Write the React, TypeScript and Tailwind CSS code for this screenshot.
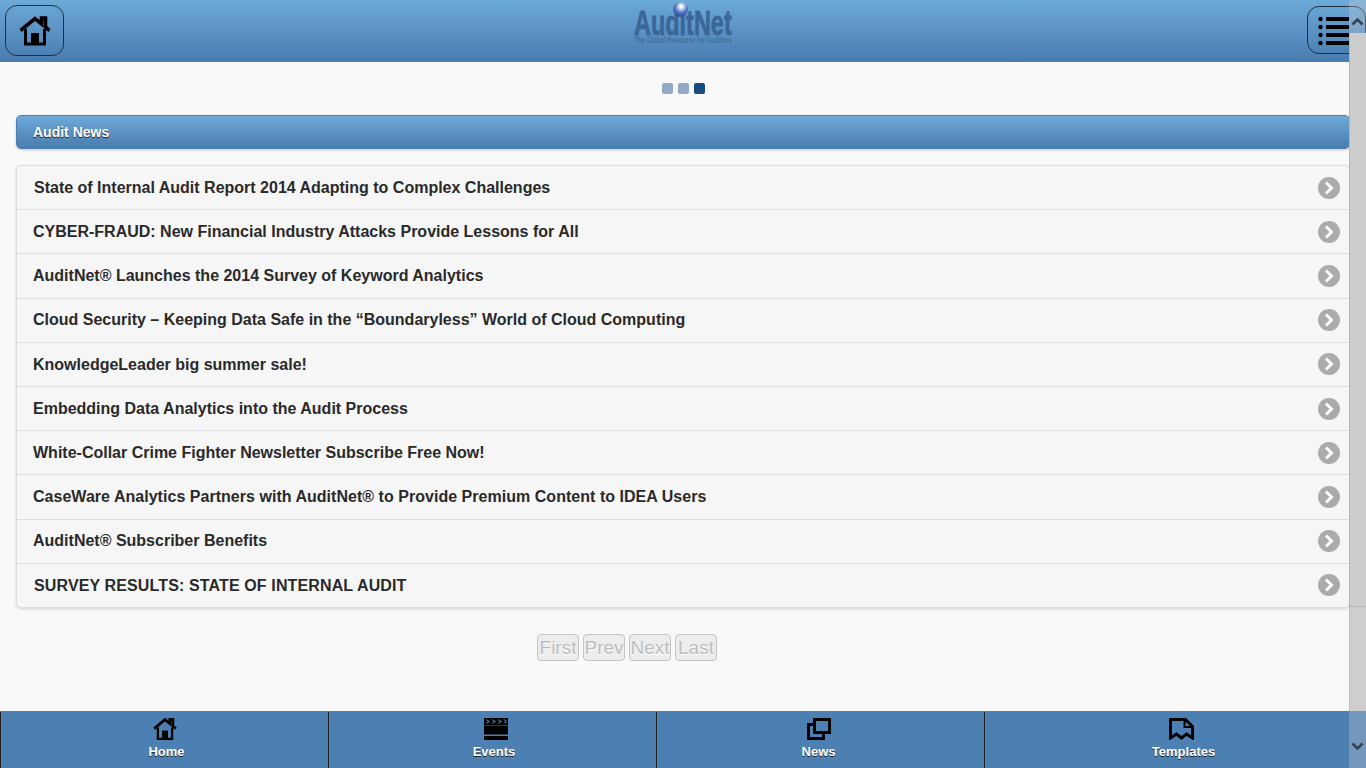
import React from "react";

const news = [
  { title: "State of Internal Audit Report 2014 Adapting to Complex Challenges", pad: "pl-[17px]", nudge: "pt-[0.4px]" },
  { title: "CYBER-FRAUD: New Financial Industry Attacks Provide Lessons for All", pad: "pl-4", nudge: "pt-[0.4px]" },
  { title: "AuditNet® Launches the 2014 Survey of Keyword Analytics", pad: "pl-4", nudge: "pt-[0.4px]" },
  { title: "Cloud Security – Keeping Data Safe in the “Boundaryless” World of Cloud Computing", pad: "pl-4", nudge: "pt-[0.4px]" },
  { title: "KnowledgeLeader big summer sale!", pad: "pl-4", nudge: "pt-[0.4px]" },
  { title: "Embedding Data Analytics into the Audit Process", pad: "pl-4", nudge: "pt-[0.4px]" },
  { title: "White-Collar Crime Fighter Newsletter Subscribe Free Now!", pad: "pl-4", nudge: "pt-[0.4px]" },
  { title: "CaseWare Analytics Partners with AuditNet® to Provide Premium Content to IDEA Users", pad: "pl-4 tracking-[0.03px]", nudge: "pt-[0.4px]" },
  { title: "AuditNet® Subscriber Benefits", pad: "pl-4", nudge: "pt-[0.4px]" },
  { title: "SURVEY RESULTS: STATE OF INTERNAL AUDIT", pad: "pl-[17px] tracking-[0.13px]", nudge: "pt-[1px]" },
];

const HomeIcon = ({ size }: { size: number }) => (
  <svg width={size} height={size} viewBox="0 0 32 32" fill="none">
    <path d="M1.500 15.500 16 3.500l6.500 5.400V3h4v9.200l4 3.300" stroke="#000" strokeWidth="3.600" />
    <path d="M6.500 14V29h19V14" stroke="#000" strokeWidth="3" />
    <rect x="12" y="18" width="8" height="11" fill="#000" />
  </svg>
);

const ListIcon = () => (
  <svg width="31" height="30" viewBox="0 0 31 30" fill="#000">
    <circle cx="2.500" cy="4" r="2.200" />
    <circle cx="2.500" cy="12" r="2.200" />
    <circle cx="2.500" cy="20" r="2.200" />
    <circle cx="2.500" cy="28" r="2.200" />
    <rect x="8" y="2" width="23" height="4" />
    <rect x="8" y="10" width="23" height="4" />
    <rect x="8" y="18" width="23" height="4" />
    <rect x="8" y="26" width="23" height="4" />
  </svg>
);

const FilmIcon = () => (
  <svg width="25" height="22" viewBox="0 0 25 22" fill="#000">
    <path d="M1 0h24v7H1zM1 7.500h24V22H1z" />
    <path d="M4 1.500 7 3.500 4 5.500H2.500L5 3.500 2.500 1.500zM10 1.500l3 2-3 2H8.500l2.500-2-2.500-2zM16 1.500l3 2-3 2h-1.500l2.500-2-2.500-2zM22 1.500l2 2-2 2h-1.500l2-2-2-2z" fill="#4d80b2" />
    <rect x="1" y="16.500" width="24" height="1.500" fill="#4d80b2" />
  </svg>
);

const WindowsIcon = () => (
  <svg width="24" height="22" viewBox="0 0 24 22" fill="none" stroke="#000" strokeWidth="3">
    <rect x="7.500" y="1.500" width="15" height="13" />
    <path d="M7.500 6.500h-6v14h15v-6" />
  </svg>
);

const TemplateIcon = () => (
  <svg width="25" height="22" viewBox="0 0 25 22" fill="none" stroke="#000" strokeWidth="3">
    <path d="M1.500 20V1.500h15l7 7V20l-6-4-5 4-5-4z" />
    <path d="M15.500 2v7h8" strokeWidth="2" />
  </svg>
);

const Chevron = ({ up }: { up?: boolean }) => (
  <svg width="13" height="9" viewBox="0 0 13 9" fill="none">
    <path d={up ? "M1.500 7.500 6.500 2.500l5 5" : "M1.500 1.500l5 5 5-5"} stroke="#36414f" strokeWidth="2.600" />
  </svg>
);

const FooterTab = ({
  icon,
  label,
  className,
  iconClass,
  labelClass,
}: {
  icon: React.ReactNode;
  label: string;
  className: string;
  iconClass: string;
  labelClass: string;
}) => (
  <div className={`flex flex-col items-center pt-[6px] ${className}`}>
    <div className={`h-[22px] flex items-center ${iconClass}`}>{icon}</div>
    <span className={`text-[13px] font-bold text-white leading-[20px] mt-[2px] [text-shadow:0_1px_0_#222] ${labelClass}`}>
      {label}
    </span>
  </div>
);

export default function App() {
  return (
    <div className="relative w-[1366px] h-[768px] overflow-hidden bg-[#f9f9f9] font-['Liberation_Sans',Arial,sans-serif] flex flex-col">
      <header className="h-[62px] shrink-0 bg-gradient-to-b from-[#6caad8] to-[#4a7cb0] flex items-center justify-between pl-[5px] border-b border-[#4d80b2]">
        <button className="w-[59px] h-[51px] rounded-[12px] border border-[#22303e] flex items-center justify-center">
          <HomeIcon size={32} />
        </button>
        <div className="relative w-[100px] h-[42px] mr-[4px] mb-[16px] text-[#3a6797]">
          <div className="pt-[8px] text-[35px] leading-[25px] font-bold origin-left scale-x-[0.67] whitespace-nowrap [-webkit-text-stroke:0.8px_#3a6797]">
            AuditNet
          </div>
          <div className="mt-[2px] text-[9px] leading-[7px] font-bold text-[#41709f] origin-left scale-x-[0.68] whitespace-nowrap">
            The Global Resource for Auditors
          </div>
          <span className="absolute left-[39px] top-0 w-[15px] h-[15px] rounded-full bg-[radial-gradient(circle_at_55%_30%,#ffffff_8%,#4f78c8_45%,#1c2f70)]" />
        </div>
        <button className="w-[59px] h-[48px] mb-[1px] rounded-[12px] border border-[#22303e] flex items-center pl-[10px]">
          <ListIcon />
        </button>
      </header>

      <main className="flex-1 w-full px-4 flex flex-col">
        <div className="flex justify-center gap-[5px] pt-[21px]">
          <span className="w-[11px] h-[11px] rounded-[2px] bg-[#92a9c6]" />
          <span className="w-[11px] h-[11px] rounded-[2px] bg-[#92a9c6]" />
          <span className="w-[11px] h-[11px] rounded-[2px] bg-[#1a4c84]" />
        </div>

        <div className="mt-[21px] h-[34px] rounded-[5px] border border-[#4a80b4] bg-gradient-to-b from-[#6caad8] to-[#4a7cb0] flex items-center pl-4 shadow-[0_1px_3px_rgba(0,0,0,0.2)]">
          <span className="text-[14px] font-bold text-white [text-shadow:0_1px_1px_#222]">Audit News</span>
        </div>

        <ul className="mt-4 rounded-[5px] border border-[#ddd] bg-[#f6f6f6] shadow-[0_1px_3px_rgba(0,0,0,0.15)]">
          {news.map((item, i) => (
            <li
              key={item.title}
              className={`flex items-center justify-between pr-[9px] text-[16px] font-bold text-[#2a2a2a] ${item.pad} ${
                i > 0 ? "h-[44.2px] border-t border-[#ddd]" : "h-[43.2px]"
              }`}
            >
              <span className={item.nudge}>{item.title}</span>
              <span className="w-[22px] h-[22px] rounded-full bg-[#ababab] flex items-center justify-center">
                <svg width="12" height="14" viewBox="0 0 12 14" fill="none">
                  <path d="M3 1.500 8.500 7 3 12.500" stroke="#fff" strokeWidth="3" />
                </svg>
              </span>
            </li>
          ))}
        </ul>

        <div className="mt-[26px] pr-[112px] flex justify-center gap-1">
          {["First", "Prev", "Next", "Last"].map((label) => (
            <span
              key={label}
              className="w-[42px] h-[27px] rounded-[4px] border border-[#c4c4c4] bg-[#ededed] text-[#bdbdbd] text-[19px] leading-[26px] text-center [text-shadow:0_1px_0_#fff]"
            >
              {label}
            </span>
          ))}
        </div>
      </main>

      <footer className="h-[57px] shrink-0 bg-[#4d80b2] grid grid-cols-[329px_328px_328px_381px] border-t border-[#4d80b2]">
        <FooterTab className="border-l border-r border-[#222]" iconClass="" labelClass="ml-[4px]" icon={<HomeIcon size={24} />} label="Home" />
        <FooterTab className="border-r border-[#222]" iconClass="ml-[5px]" labelClass="ml-[3px]" icon={<FilmIcon />} label="Events" />
        <FooterTab className="border-r border-[#222]" iconClass="mr-[3px]" labelClass="mr-[4px]" icon={<WindowsIcon />} label="News" />
        <FooterTab className="" iconClass="ml-[11px]" labelClass="ml-[16px]" icon={<TemplateIcon />} label="Templates" />
      </footer>

      <div className="absolute right-0 top-0 bottom-0 w-[17px] flex flex-col">
        <div className="h-[33px] pt-[17px] bg-[#cfcfcf]/30 flex justify-center">
          <div className="h-[9px] flex"><Chevron up /></div>
        </div>
        <div className="h-[574px] bg-[#cdcdcd] border-l border-b border-[#b4b4b4]" />
        <div className="h-[104px] bg-[#cecece] border-l border-[#bdbdbd]" />
        <div className="h-[57px] pt-[31px] bg-[#cfcfcf]/30 flex justify-center">
          <div className="h-[9px] flex"><Chevron /></div>
        </div>
      </div>
    </div>
  );
}
